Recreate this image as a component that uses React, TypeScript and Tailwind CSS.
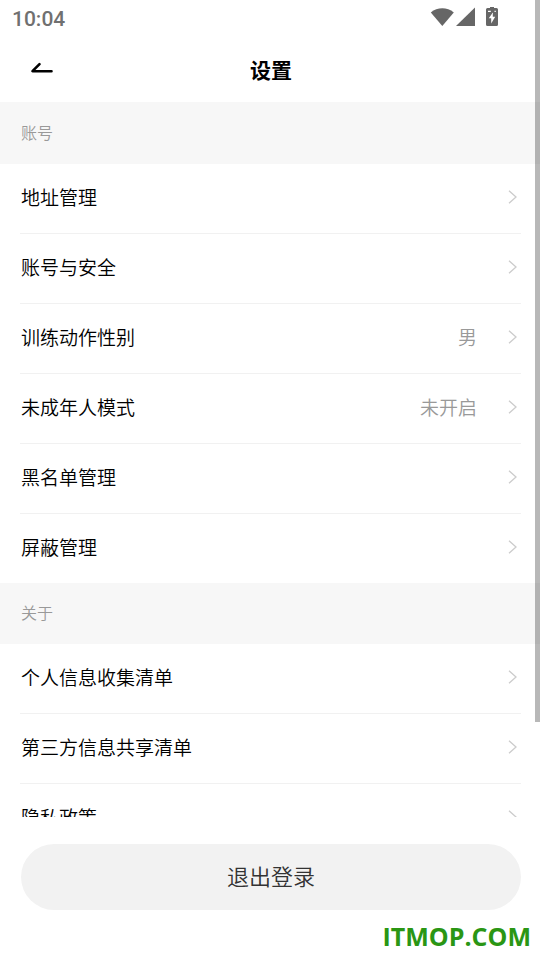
import React from "react";

type Item = { label: string; value?: string };
type Group = { title: string; items: Item[] };

const groups: Group[] = [
  {
    title: "账号",
    items: [
      { label: "地址管理" },
      { label: "账号与安全" },
      { label: "训练动作性别", value: "男" },
      { label: "未成年人模式", value: "未开启" },
      { label: "黑名单管理" },
      { label: "屏蔽管理" },
    ],
  },
  {
    title: "关于",
    items: [
      { label: "个人信息收集清单" },
      { label: "第三方信息共享清单" },
      { label: "隐私政策" },
    ],
  },
];

function StatusBar() {
  return (
    <div className="flex h-9 shrink-0 items-center justify-between pt-0.5 pr-[42px] pl-3 text-[#666666]">
      <time className="font-['Roboto',sans-serif] text-[21px] leading-6 font-medium text-[#707070]">10:04</time>
      <svg width="68" height="20" viewBox="0 0 68 20" fill="currentColor" className="mb-1" aria-hidden="true">
        <path d="M0.8 5.4C7.5-0.1 17.1-0.1 23.8 5.4L12.3 19Z" />
        <path d="M45 0.5V19H26Z" />
        <path
          fillRule="evenodd"
          d="M60 -0.5h4V1h2.5Q68 1 68 2.500V17.500Q68 19 66.500 19H57.500Q56 19 56 17.500V2.500Q56 1 57.500 1H60ZM62.800 5.500L58.800 11.300H61.200V16.500L65.200 9.700H62.800ZM58 3.800v1.200h2.800V3.800ZM64.500 3.800v1.200h1.300V3.800Z"
        />
      </svg>
    </div>
  );
}

function Chevron() {
  return (
    <svg width="9" height="14" viewBox="0 0 9 14" fill="none" stroke="#cccccc" strokeWidth="1.3" aria-hidden="true">
      <path d="M1 0.700L8 7L1 13.300" />
    </svg>
  );
}

function Row({ item }: { item: Item }) {
  return (
    <li className="border-b border-[#f1f1f1] last:border-b-0">
      <button type="button" className="flex h-[69px] w-full items-center pr-1 pb-1 pl-px text-left">
        <span className="flex-1 text-[19px] leading-7 text-black">{item.label}</span>
        {item.value && <span className="mr-[31px] text-[19px] leading-7 text-[#999999]">{item.value}</span>}
        <Chevron />
      </button>
    </li>
  );
}

export default function App() {
  return (
    <div className="relative flex h-screen flex-col overflow-hidden bg-white font-['Noto_Sans_CJK_SC',sans-serif] font-[350]">
      <StatusBar />
      <header className="grid h-[66px] shrink-0 grid-cols-3 items-center pr-[19px] pl-[21px]">
        <button type="button" aria-label="返回" className="flex size-11 items-center justify-center pr-0.5 pb-0.5">
          <svg width="24" height="14" viewBox="0 0 24 14" fill="none" stroke="#000000" strokeWidth="2.600" strokeLinecap="round" strokeLinejoin="round">
            <path d="M9.500 3.200L2.500 10.200H21.500" />
          </svg>
        </button>
        <h1 className="text-center text-[21px] leading-8 font-bold text-black">设置</h1>
      </header>
      <main className="min-h-0 flex-1 overflow-y-auto border-t border-[#f7f7f7] [scrollbar-width:none]">
        {groups.map((group) => (
          <section key={group.title}>
            <h2 className="flex h-[61px] items-center bg-[#f7f7f7] px-[21px] pb-[3px] text-[16px] leading-6 text-[#999999]">
              {group.title}
            </h2>
            <ul className="pr-[19px] pl-5">
              {group.items.map((item) => (
                <Row key={item.label} item={item} />
              ))}
            </ul>
          </section>
        ))}
      </main>
      <footer className="flex shrink-0 flex-col pt-[27px] pr-[19px] pl-[21px]">
        <button type="button" className="h-[66px] rounded-full bg-[#f2f2f2] pb-1 text-[22px] leading-8 text-[#333333]">
          退出登录
        </button>
        <p className="-mr-2.5 h-[50px] self-end pt-2 font-['Open_Sans',sans-serif] text-[25px] leading-9 font-bold text-[#2a9614]">
          ITMOP.COM
        </p>
      </footer>
      <div className="absolute top-0 right-0 h-[722px] w-[5px] bg-black/28" aria-hidden="true" />
    </div>
  );
}
